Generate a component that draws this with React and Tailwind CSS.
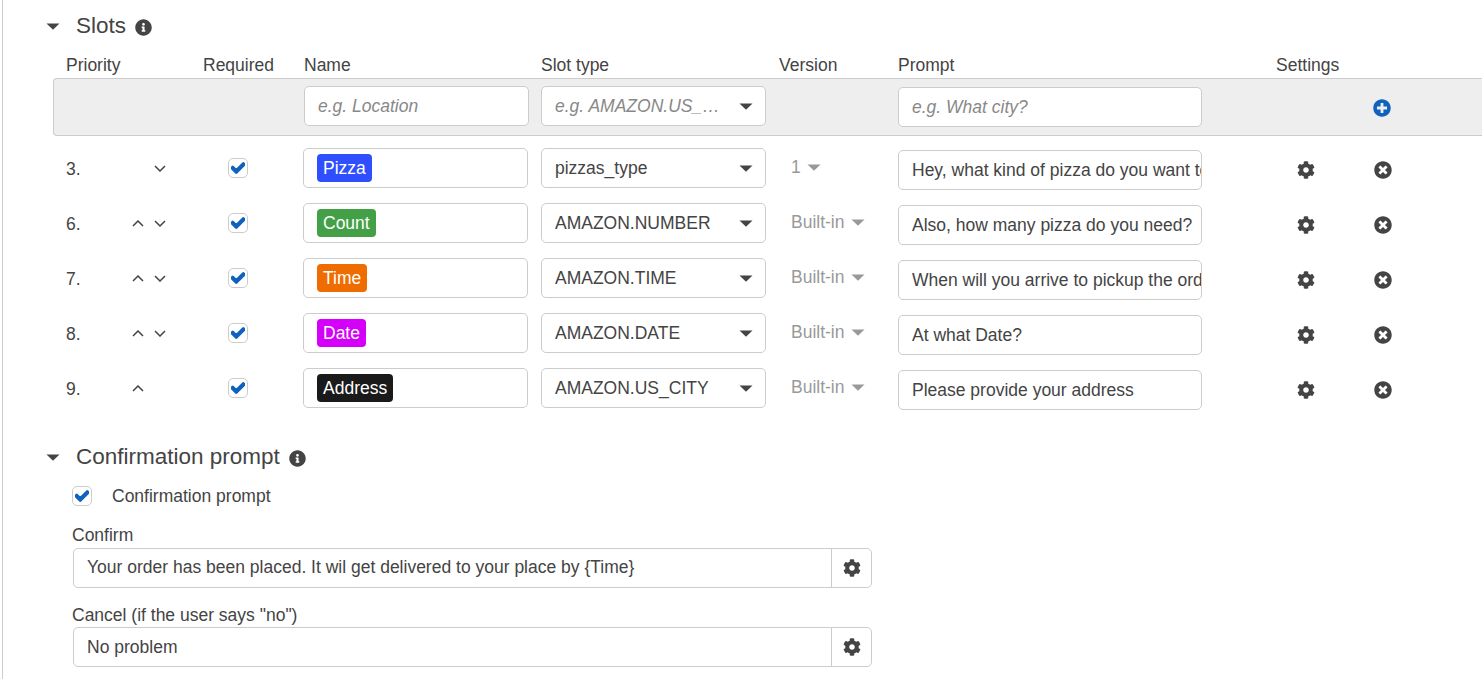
import React from 'react';
import { FaCheck, FaCog, FaInfoCircle, FaPlusCircle, FaTimesCircle } from 'react-icons/fa';

const gridCols = 'grid grid-cols-[137px_100px_238px_238px_119px_378px_70px_80px]';

const slots = [
  { n: '3.', up: false, down: true, name: 'Pizza', color: 'bg-[#2f4fff]', type: 'pizzas_type', version: '1', prompt: 'Hey, what kind of pizza do you want to order?' },
  { n: '6.', up: true, down: true, name: 'Count', color: 'bg-[#43a047]', type: 'AMAZON.NUMBER', version: 'Built-in', prompt: 'Also, how many pizza do you need?' },
  { n: '7.', up: true, down: true, name: 'Time', color: 'bg-[#ef6c00]', type: 'AMAZON.TIME', version: 'Built-in', prompt: 'When will you arrive to pickup the order?' },
  { n: '8.', up: true, down: true, name: 'Date', color: 'bg-[#d500f9]', type: 'AMAZON.DATE', version: 'Built-in', prompt: 'At what Date?' },
  { n: '9.', up: true, down: false, name: 'Address', color: 'bg-[#1a1a1a]', type: 'AMAZON.US_CITY', version: 'Built-in', prompt: 'Please provide your address' },
];

const Caret = ({ className }) => (
  <svg viewBox="0 0 14 7" className={className} fill="currentColor">
    <path d="M0.5 0.5h13L7 6.8z" />
  </svg>
);

const Chevron = ({ dir }) => (
  <svg viewBox="0 0 12 7" className="w-3 h-[7px] text-[#444]" fill="none" stroke="currentColor" strokeWidth="1.5">
    <path d={dir === 'up' ? 'M1 6l5-5 5 5' : 'M1 1l5 5 5-5'} />
  </svg>
);

const Checkbox = () => (
  <div className="w-5 h-5 rounded-[5px] border border-[#ccc] bg-white flex items-center justify-center text-[#0f62bd]">
    <FaCheck size={14} stroke="currentColor" strokeWidth={50} />
  </div>
);

const Section = ({ title, className }) => (
  <div className={`flex items-center ${className}`}>
    <Caret className="w-[14px] h-[7px] text-[#444] ml-[46px]" />
    <h2 className="ml-[16px] text-[22.5px] leading-7 text-[#444]">{title}</h2>
    <FaInfoCircle size={17} className="ml-[9px] mt-[2px] text-[#444]" />
  </div>
);

const Select = ({ value, placeholder }) => (
  <div className="w-[225px] h-10 rounded-[5px] border border-[#ccc] bg-white flex items-center pl-[13px] pr-[12px]">
    <span className={`flex-1 whitespace-nowrap overflow-hidden ${placeholder ? 'italic text-[#888]' : ''}`}>{value}</span>
    <Caret className="w-[14px] h-[7px] text-[#444] shrink-0" />
  </div>
);

const PromptInput = ({ value, placeholder }) => (
  <div className={`w-[304px] h-10 rounded-[5px] border border-[#ccc] bg-white flex items-center pl-[13px] pr-px overflow-hidden whitespace-nowrap ${placeholder ? 'italic text-[#888]' : ''}`}>
    {value}
  </div>
);

const SlotRow = ({ slot }) => (
  <div className={`${gridCols} h-[55px]`}>
    <div className="flex items-start pt-[8px]">
      <span className="w-[64px]">{slot.n}</span>
      <div className="w-[16px] mt-[9px] flex justify-center">{slot.up && <Chevron dir="up" />}</div>
      <div className="w-[12px] mt-[9px] ml-[8px] flex justify-center">{slot.down && <Chevron dir="down" />}</div>
    </div>
    <div className="pt-[10px] pl-[25px]"><Checkbox /></div>
    <div>
      <div className="w-[225px] h-10 rounded-[5px] border border-[#ccc] bg-white flex items-center pl-[13px]">
        <span className={`${slot.color} text-white h-7 px-[6px] rounded-[4px] leading-7`}>{slot.name}</span>
      </div>
    </div>
    <Select value={slot.type} />
    <div className="flex items-start pl-[12px] pt-[6px] text-[#999]">
      <span>{slot.version}</span>
      <Caret className="w-[14px] h-[7px] ml-[6px] mt-[10px] text-[#999]" />
    </div>
    <div className="pt-[2px]"><PromptInput value={slot.prompt} /></div>
    <div className="pt-[13px] pl-[21px] text-[#444]"><FaCog size={18} /></div>
    <div className="pt-[13px] pl-[28px] text-[#444]"><FaTimesCircle size={18} /></div>
  </div>
);

const FieldGroup = ({ label, value, className, labelClass, valueClass }) => (
  <div className={className}>
    <div className={`ml-[72px] leading-[26px] ${labelClass}`}>{label}</div>
    <div className="ml-[73px] w-[799px] h-10 rounded-[5px] border border-[#ccc] bg-white flex">
      <div className={`flex-1 flex items-center pl-[13px] ${valueClass}`}>{value}</div>
      <div className="w-10 border-l border-[#ccc] flex items-center justify-center text-[#444]"><FaCog size={18} /></div>
    </div>
  </div>
);

export default function App() {
  return (
    <div className="w-[1482px] h-[679px] overflow-hidden bg-white text-[#444] text-[17.5px] font-['Liberation_Sans',Arial,sans-serif]">
      <div className="ml-[2px] h-full border-l border-[#ccc]">
        <div className="-ml-[3px]">
          <Section title="Slots" className="pt-[12px] h-[40px]" />

          <div className={`${gridCols} pl-[66px] h-[38px] items-center pt-[12px]`}>
            <span>Priority</span>
            <span>Required</span>
            <span className="pl-px">Name</span>
            <span>Slot type</span>
            <span>Version</span>
            <span>Prompt</span>
            <span className="whitespace-nowrap">Settings</span>
            <span />
          </div>

          <div className="ml-[53px] h-[58px] rounded-l-[4px] border border-r-0 border-[#ccc] bg-[#eee] pt-[7px] pl-[12px]">
            <div className={gridCols}>
              <span />
              <span />
              <div className="pl-px">
                <div className="w-[225px] h-10 rounded-[5px] border border-[#ccc] bg-white flex items-center pl-[13px] italic text-[#888]">e.g. Location</div>
              </div>
              <Select value="e.g. AMAZON.US_…" placeholder />
              <span />
              <div className="pt-px"><PromptInput value="e.g. What city?" placeholder /></div>
              <span />
              <div className="pt-[13px] pl-[27px] text-[#0f62bd]"><FaPlusCircle size={18} /></div>
            </div>
          </div>

          <div className="pl-[66px] pt-[12px] h-[309px]">
            {slots.map((slot) => (
              <SlotRow key={slot.n} slot={slot} />
            ))}
          </div>

          <Section title="Confirmation prompt" className="h-[28px] -mt-[2px]" />

          <div className="flex items-center ml-[72px] mt-[15px] h-5">
            <Checkbox />
            <span className="ml-5">Confirmation prompt</span>
          </div>

          <FieldGroup label="Confirm" value="Your order has been placed. It wil get delivered to your place by {Time}" className="mt-[16px]" labelClass="h-[26px]" valueClass="pb-[2px]" />
          <FieldGroup label="Cancel (if the user says &quot;no&quot;)" value="No problem" className="mt-[14px]" labelClass="h-[25px]" valueClass="" />
        </div>
      </div>
    </div>
  );
}
